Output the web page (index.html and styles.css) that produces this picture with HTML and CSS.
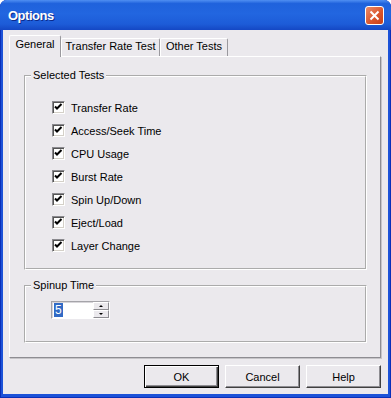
FILE: index.html
```html
<!DOCTYPE html>
<html lang="en">
<head>
    <meta charset="UTF-8">
    <title>Options</title>
    <link rel="stylesheet" href="styles.css">
</head>
<body>
    <div class="window">
        <div class="titlebar">
            <span class="title">Options</span>
            <span class="close">
                <svg width="11" height="11" viewBox="0 0 11 11"><path d="M1.5 1.5 L9.5 9.5 M9.5 1.5 L1.5 9.5" stroke="#fff" stroke-width="2" fill="none"/></svg>
            </span>
        </div>
        <div class="client">
            <div class="tabs">
                <div class="tab active tab-general">General</div>
                <div class="tab tab-transfer">Transfer Rate Test</div>
                <div class="tab tab-other">Other Tests</div>
            </div>
            <div class="panel">
                <fieldset class="group">
                    <legend>Selected Tests</legend>
                    <ul class="checks">
                        <li><span class="box"><svg width="11" height="11" viewBox="0 0 11 11"><path d="M2 4.5 L4 6.5 L8.5 2" stroke="#000" stroke-width="2" fill="none"/></svg></span>Transfer Rate</li>
                        <li><span class="box"><svg width="11" height="11" viewBox="0 0 11 11"><path d="M2 4.5 L4 6.5 L8.5 2" stroke="#000" stroke-width="2" fill="none"/></svg></span>Access/Seek Time</li>
                        <li><span class="box"><svg width="11" height="11" viewBox="0 0 11 11"><path d="M2 4.5 L4 6.5 L8.5 2" stroke="#000" stroke-width="2" fill="none"/></svg></span>CPU Usage</li>
                        <li><span class="box"><svg width="11" height="11" viewBox="0 0 11 11"><path d="M2 4.5 L4 6.5 L8.5 2" stroke="#000" stroke-width="2" fill="none"/></svg></span>Burst Rate</li>
                        <li><span class="box"><svg width="11" height="11" viewBox="0 0 11 11"><path d="M2 4.5 L4 6.5 L8.5 2" stroke="#000" stroke-width="2" fill="none"/></svg></span>Spin Up/Down</li>
                        <li><span class="box"><svg width="11" height="11" viewBox="0 0 11 11"><path d="M2 4.5 L4 6.5 L8.5 2" stroke="#000" stroke-width="2" fill="none"/></svg></span>Eject/Load</li>
                        <li><span class="box"><svg width="11" height="11" viewBox="0 0 11 11"><path d="M2 4.5 L4 6.5 L8.5 2" stroke="#000" stroke-width="2" fill="none"/></svg></span>Layer Change</li>
                    </ul>
                </fieldset>
                <fieldset class="group spin-group">
                    <legend>Spinup Time</legend>
                    <div class="spin-body">
                        <div class="spinbox">
                            <div class="field"><span class="sel">5</span></div>
                            <div class="arrows">
                                <span class="arrow up"></span>
                                <span class="arrow down"></span>
                            </div>
                        </div>
                    </div>
                </fieldset>
            </div>
            <div class="buttons">
                <button class="default">OK</button>
                <button>Cancel</button>
                <button>Help</button>
            </div>
        </div>
    </div>
</body>
</html>
```
FILE: styles.css
```css
* {
    box-sizing: border-box;
}
body {
    margin: 0;
    font-family: "Liberation Sans", Arial, sans-serif;
    font-size: 11px;
    color: #000;
    background: #fff;
}
.window {
    width: 391px;
    height: 398px;
    display: flex;
    flex-direction: column;
    background: #1c52d8;
    box-shadow: inset 1px 0 0 #0a2fb8, inset -1px 0 0 #0a2fb8, inset 0 -1px 0 #0a2fb8;
    border-radius: 7px 7px 0 0;
    overflow: hidden;
}
.titlebar {
    height: 30px;
    flex: none;
    display: flex;
    align-items: center;
    justify-content: space-between;
    padding: 0 7px 0 8px;
    background: linear-gradient(#4f8ff2 0%, #1f62dc 12%, #2266e0 45%, #1d5cd8 80%, #1447c4 100%);
}
.title {
    color: #fff;
    font-weight: bold;
    font-size: 13px;
    letter-spacing: -0.5px;
    text-shadow: 1px 1px 0 #0b2a8a;
}
.close {
    width: 19px;
    height: 19px;
    border: 1px solid #fff;
    border-radius: 3px;
    background: linear-gradient(135deg, #ec8c6a, #d9532a 60%, #c8401a);
    display: flex;
    align-items: center;
    justify-content: center;
}
.close svg {
    display: block;
}
.client {
    flex: 1;
    margin: 0 3px 4px 3px;
    background: #ebe9ed;
    padding: 5px 7px 0 6px;
}
.tabs {
    display: flex;
    align-items: flex-end;
    height: 21px;
    position: relative;
    z-index: 1;
}
.tab {
    height: 18px;
    padding-top: 1px;
    line-height: 13px;
    text-align: center;
    border: 1px solid;
    border-color: #fff #9a999e transparent #fff;
    border-bottom: none;
    border-radius: 2px 2px 0 0;
    background: #ebe9ed;
}
.tab.active {
    height: 22px;
    padding-top: 2px;
    margin-bottom: -1px;
}
.tab-general {
    width: 52px;
}
.tab-transfer {
    width: 99px;
}
.tab-other {
    width: 68px;
}
.panel {
    height: 302px;
    border: 1px solid;
    border-color: #fff #8e8d92 #8e8d92 #fff;
    box-shadow: 1px 1px 0 #c6c4c8;
    padding: 12px 13px 0 14px;
}
.group {
    margin: 0;
    padding: 0;
    min-width: 0;
    border: 2px groove #fff;
}
.group legend {
    padding: 0 2px;
    margin-left: 5px;
    line-height: 13px;
}
.checks {
    list-style: none;
    margin: 0;
    padding: 14px 0 11px 26px;
}
.checks li {
    height: 23px;
    display: flex;
    align-items: center;
}
.box {
    width: 13px;
    height: 13px;
    margin-right: 6px;
    background: #fff;
    border: 1px solid;
    border-color: #8a898e #fff #fff #8a898e;
    box-shadow: inset 1px 1px 0 #555, inset -1px -1px 0 #d4d0c8;
    display: flex;
    align-items: center;
    justify-content: center;
}
.box svg {
    display: block;
}
.spin-group {
    margin-top: 9px;
}
.spin-body {
    padding: 9px 0 22px 25px;
}
.spinbox {
    display: flex;
    width: 59px;
    height: 18px;
    border: 1px solid;
    border-color: #a5a4a9 #fff #fff #a5a4a9;
    box-shadow: inset 1px 1px 0 #d8d6da;
    background: #fff;
}
.field {
    flex: 1;
    padding: 1px 0 0 2px;
}
.sel {
    display: inline-block;
    background: #316ac5;
    color: #fff;
    font-size: 12px;
    line-height: 14px;
    padding: 0 1px;
}
.arrows {
    width: 16px;
    display: flex;
    flex-direction: column;
}
.arrow {
    flex: 1;
    background: #ebe9ed;
    border: 1px solid;
    border-color: #fff #8e8d92 #8e8d92 #fff;
    display: flex;
    align-items: center;
    justify-content: center;
}
.arrow::after {
    content: "";
    border-left: 2px solid transparent;
    border-right: 2px solid transparent;
}
.up::after {
    border-bottom: 2px solid #000;
}
.down::after {
    border-top: 2px solid #000;
}
.buttons {
    display: flex;
    justify-content: flex-end;
    gap: 6px;
    margin-top: 7px;
}
button {
    width: 75px;
    height: 23px;
    font: inherit;
    color: #000;
    background: #ebe9ed;
    border: 1px solid;
    border-color: #fff #404040 #404040 #fff;
    box-shadow: inset -1px -1px 0 #8e8d92;
    padding: 0;
}
button.default {
    border-color: #000;
    box-shadow: inset 1px 1px 0 #fff, inset -1px -1px 0 #404040, inset -2px -2px 0 #8e8d92;
}
```
